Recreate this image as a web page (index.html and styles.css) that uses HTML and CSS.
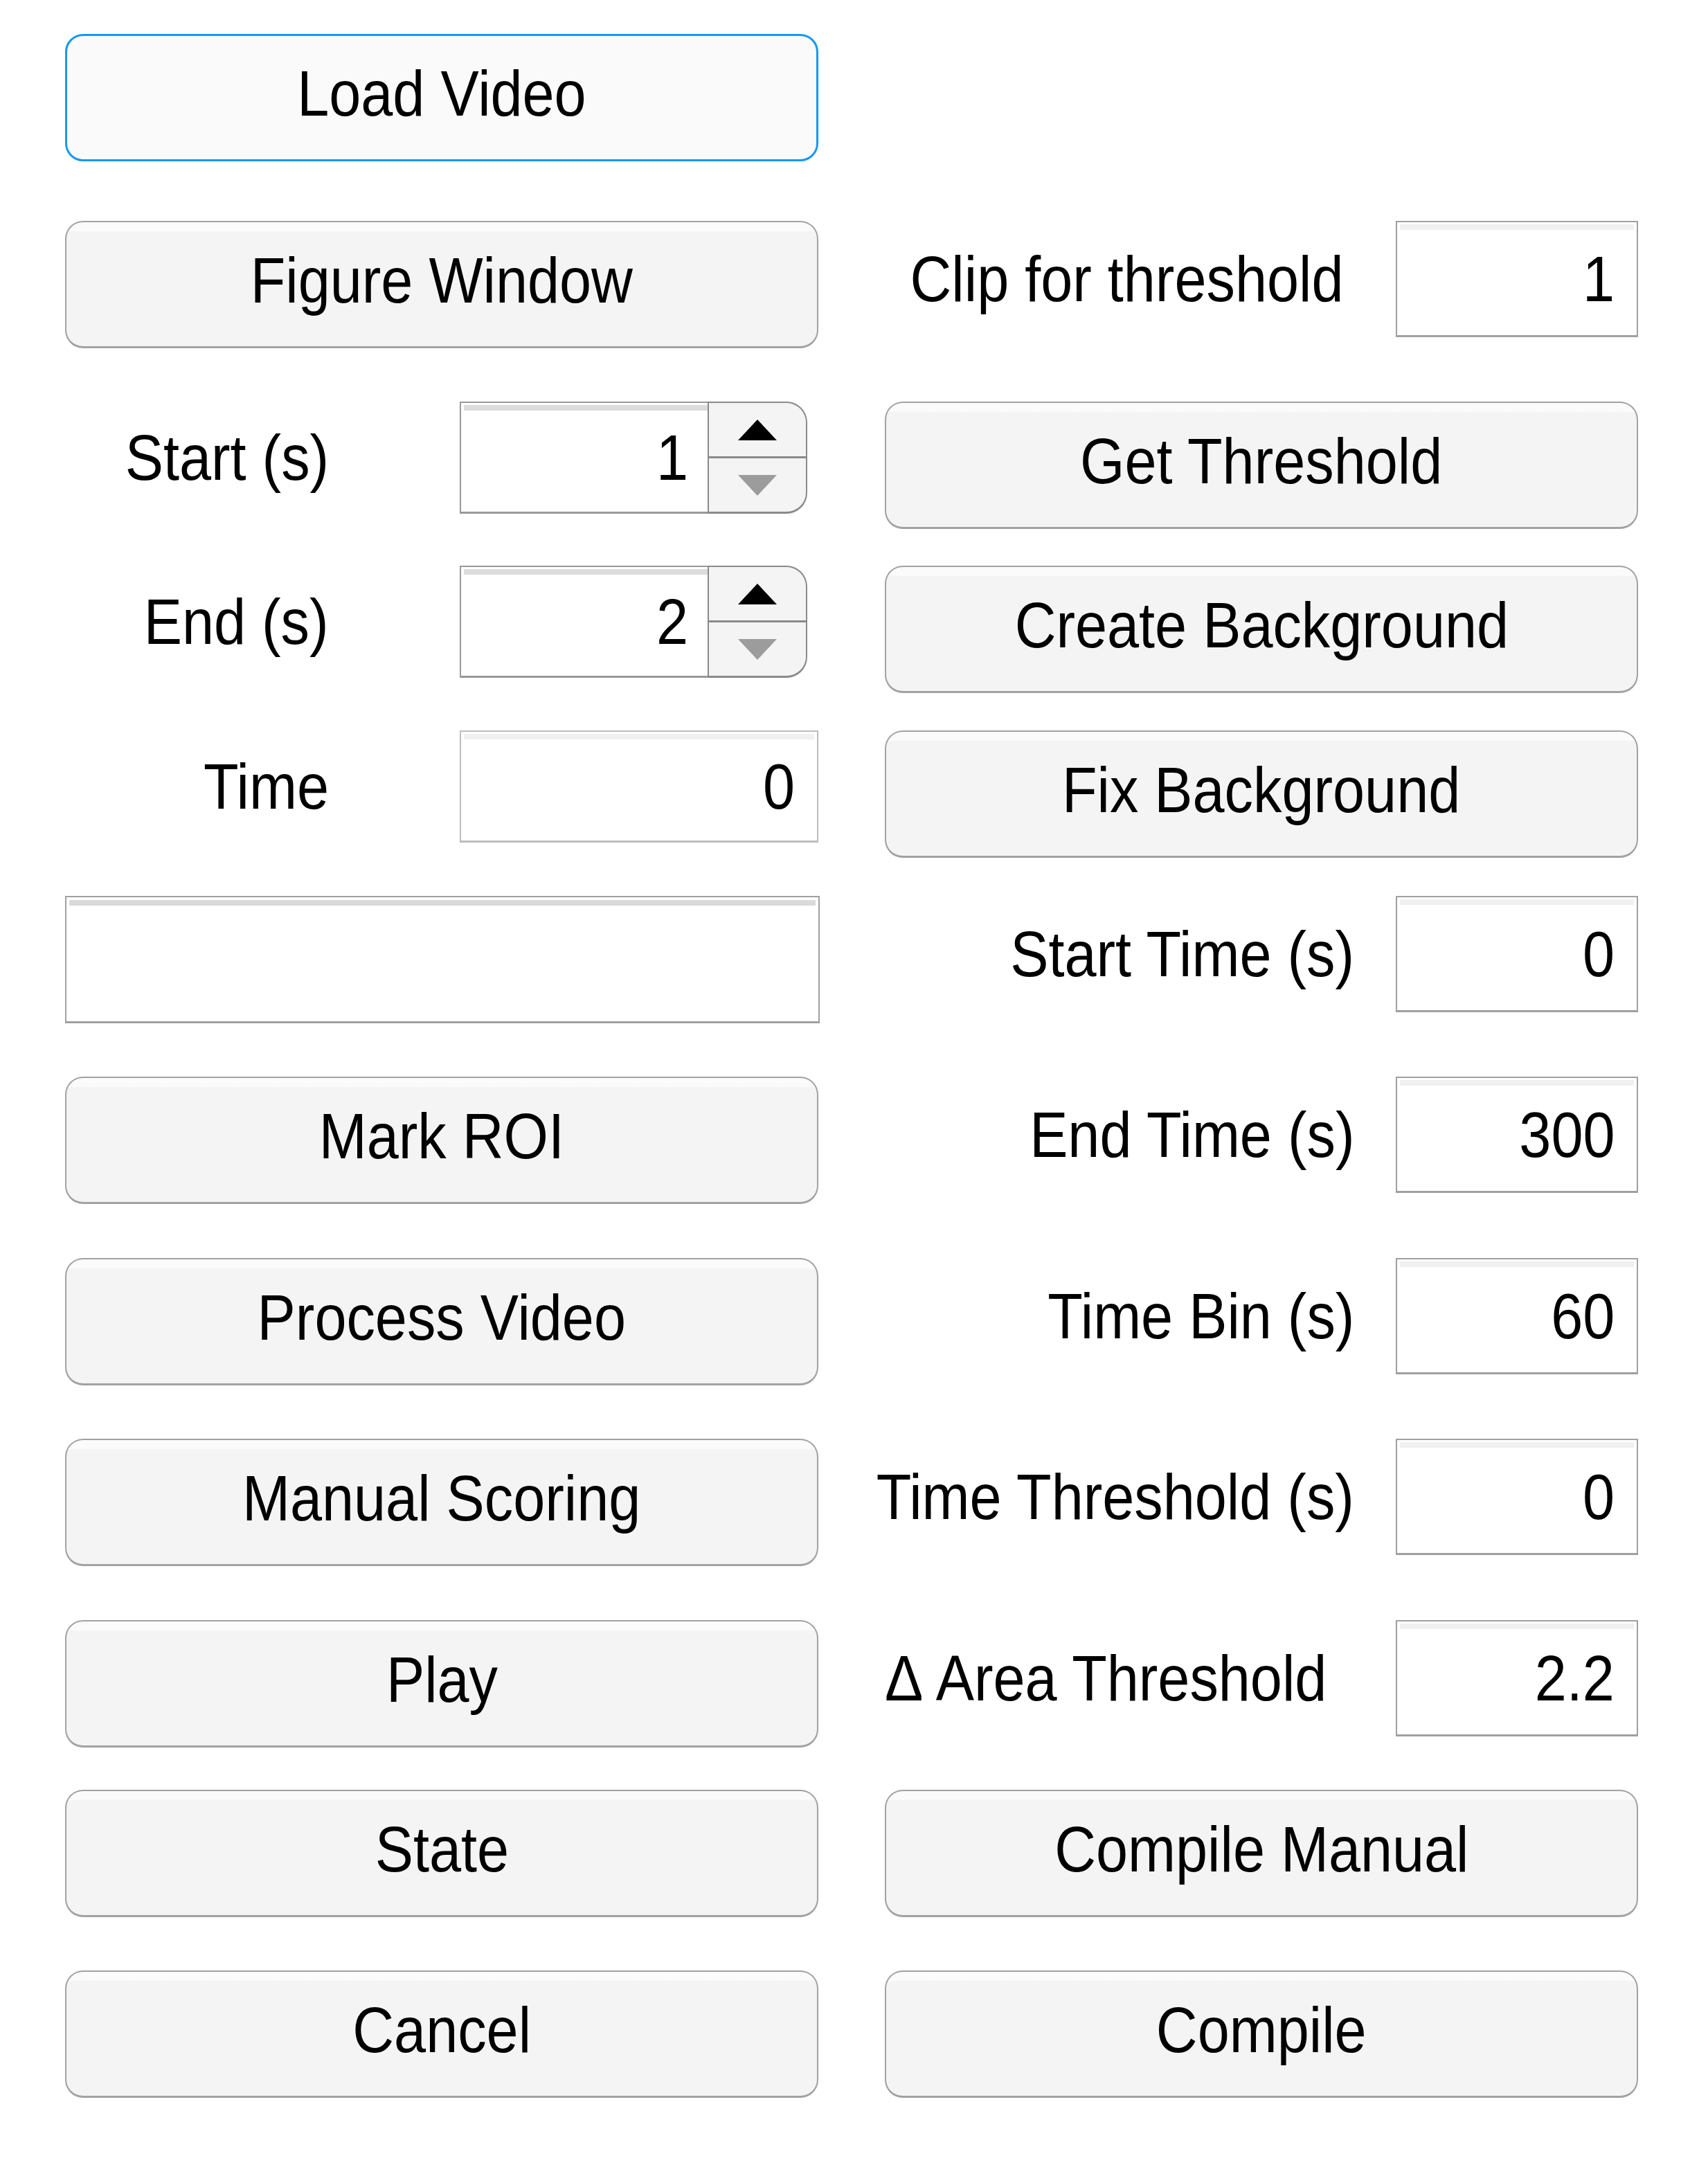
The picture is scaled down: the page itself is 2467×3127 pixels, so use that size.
FILE: index.html
```html
<!DOCTYPE html>
<html lang="en">
<head>
<meta charset="utf-8">
<title>Video Analysis</title>
<link rel="stylesheet" href="styles.css">
</head>
<body>
<div class="panel">
  <div class="cell"><button class="btn focus"><span class="t">Load Video</span></button></div>
  <div class="cell"></div>

  <div class="cell"><button class="btn"><span class="t">Figure Window</span></button></div>
  <div class="cell rfield">
    <div class="rlabel clip"><span class="t tr">Clip for threshold</span></div>
    <div class="num"><span class="t tr">1</span></div>
  </div>

  <div class="cell lfield">
    <div class="llabel"><span class="t tr">Start (s)</span></div>
    <div class="spin">
      <div class="spin-field"><span class="t tr">1</span></div>
      <div class="spin-btns">
        <div class="arrow up"><svg width="56" height="30" viewBox="0 0 56 30"><polygon points="0,30 28,0 56,30" fill="#000"/></svg></div>
        <div class="arrow down"><svg width="56" height="30" viewBox="0 0 56 30"><polygon points="0,0 56,0 28,30" fill="#9c9c9c"/></svg></div>
      </div>
    </div>
  </div>
  <div class="cell"><button class="btn"><span class="t">Get Threshold</span></button></div>

  <div class="cell lfield">
    <div class="llabel"><span class="t tr">End (s)</span></div>
    <div class="spin">
      <div class="spin-field"><span class="t tr">2</span></div>
      <div class="spin-btns">
        <div class="arrow up"><svg width="56" height="30" viewBox="0 0 56 30"><polygon points="0,30 28,0 56,30" fill="#000"/></svg></div>
        <div class="arrow down"><svg width="56" height="30" viewBox="0 0 56 30"><polygon points="0,0 56,0 28,30" fill="#9c9c9c"/></svg></div>
      </div>
    </div>
  </div>
  <div class="cell"><button class="btn"><span class="t">Create Background</span></button></div>

  <div class="cell lfield">
    <div class="llabel"><span class="t tr">Time</span></div>
    <div class="num ro wide"><span class="t tr">0</span></div>
  </div>
  <div class="cell"><button class="btn"><span class="t">Fix Background</span></button></div>

  <div class="cell"><div class="textarea"></div></div>
  <div class="cell rfield">
    <div class="rlabel"><span class="t tr">Start Time (s)</span></div>
    <div class="num"><span class="t tr">0</span></div>
  </div>

  <div class="cell"><button class="btn"><span class="t">Mark ROI</span></button></div>
  <div class="cell rfield">
    <div class="rlabel"><span class="t tr">End Time (s)</span></div>
    <div class="num"><span class="t tr">300</span></div>
  </div>

  <div class="cell"><button class="btn"><span class="t">Process Video</span></button></div>
  <div class="cell rfield">
    <div class="rlabel"><span class="t tr">Time Bin (s)</span></div>
    <div class="num"><span class="t tr">60</span></div>
  </div>

  <div class="cell"><button class="btn"><span class="t">Manual Scoring</span></button></div>
  <div class="cell rfield">
    <div class="rlabel"><span class="t tr">Time Threshold (s)</span></div>
    <div class="num"><span class="t tr">0</span></div>
  </div>

  <div class="cell"><button class="btn"><span class="t">Play</span></button></div>
  <div class="cell rfield">
    <div class="rlabel left"><span class="t tl">Δ Area Threshold</span></div>
    <div class="num"><span class="t tr">2.2</span></div>
  </div>

  <div class="cell"><button class="btn"><span class="t">State</span></button></div>
  <div class="cell"><button class="btn"><span class="t">Compile Manual</span></button></div>

  <div class="cell"><button class="btn"><span class="t">Cancel</span></button></div>
  <div class="cell"><button class="btn"><span class="t">Compile</span></button></div>
</div>
</body>
</html>
```

FILE: styles.css
```css
html, body {
  margin: 0;
  padding: 0;
  background: #ffffff;
}

body {
  font-family: "Liberation Sans", Arial, Helvetica, sans-serif;
  color: #000;
}

.panel {
  display: grid;
  grid-template-columns: 1088px 1088px;
  grid-template-rows: 270px 261px 237px 238px 239px 261px 262px 261px 262px 245px 261px 184px;
  column-gap: 96px;
  padding: 49px 0 0 94px;
  align-items: start;
}

.cell {
  min-width: 0;
}

.t {
  display: inline-block;
  white-space: nowrap;
  transform: scaleX(0.9);
  transform-origin: center;
  line-height: 1;
}

.t.tr { transform-origin: right center; }
.t.tl { transform-origin: left center; }

/* Buttons */
.btn {
  box-sizing: border-box;
  width: 100%;
  height: 184px;
  margin: 0;
  padding: 0 0 12px 0;
  border: 2px solid #a2a2a2;
  border-bottom-width: 3px;
  border-radius: 26px;
  background: linear-gradient(#fbfbfb 0, #fbfbfb 12px, #f4f4f4 14px, #f4f4f4 100%);
  font-family: inherit;
  font-size: 92px;
  color: #000;
  display: flex;
  align-items: center;
  justify-content: center;
}

.btn.focus {
  border: 3px solid #1598f3;
  background: #fafafa;
}

/* Right-hand label + field rows */
.rlabel {
  box-sizing: border-box;
  width: 678px;
  margin-right: 60px;
  display: flex;
  justify-content: flex-end;
  font-size: 92px;
}

.rfield {
  display: flex;
  align-items: center;
}

.rlabel.clip { padding-right: 16px; }
.rlabel.left { justify-content: flex-start; }

/* Left-hand label + field rows */
.lfield {
  display: flex;
  align-items: center;
}

.llabel {
  width: 381px;
  margin-right: 189px;
  display: flex;
  justify-content: flex-end;
  font-size: 92px;
}

/* Numeric edit fields */
.num {
  box-sizing: border-box;
  position: relative;
  width: 350px;
  height: 168px;
  border: 2px solid #a0a0a0;
  border-bottom-width: 3px;
  background: #fff;
  display: flex;
  align-items: center;
  justify-content: flex-end;
  padding: 0 32px 0 0;
  font-size: 92px;
}

.num::before,
.spin-field::before,
.textarea::before {
  content: "";
  position: absolute;
  top: 3px;
  left: 4px;
  right: 4px;
  height: 8px;
  background: #f0f0f0;
}

.num.ro {
  border-color: #bdbdbd;
}

.num.wide {
  width: 518px;
  height: 162px;
  padding-right: 32px;
}

/* Spinner */
.spin {
  display: flex;
  width: 502px;
  height: 162px;
}

.spin-field {
  box-sizing: border-box;
  position: relative;
  flex: 1;
  border: 2px solid #999;
  border-bottom-width: 3px;
  border-right: none;
  background: #fff;
  display: flex;
  align-items: center;
  justify-content: flex-end;
  padding: 0 28px 0 0;
  font-size: 92px;
}

.spin-field::before {
  background: #dcdcdc;
  right: 0;
}

.spin-btns {
  box-sizing: border-box;
  width: 144px;
  border: 2px solid #8a8a8a;
  border-bottom-width: 3px;
  border-radius: 0 30px 30px 0;
  background: #f4f4f4;
  display: flex;
  flex-direction: column;
  overflow: hidden;
}

.arrow {
  flex: 1;
  display: flex;
  align-items: center;
  justify-content: center;
}

.arrow svg { display: block; }

.arrow.up {
  border-bottom: 3px solid #8a8a8a;
}

/* Empty text area */
.textarea {
  box-sizing: border-box;
  position: relative;
  width: 1090px;
  height: 184px;
  border: 2px solid #a0a0a0;
  border-bottom-width: 3px;
  background: #fff;
}

.textarea::before {
  background: #d9d9d9;
  top: 4px;
}
```
